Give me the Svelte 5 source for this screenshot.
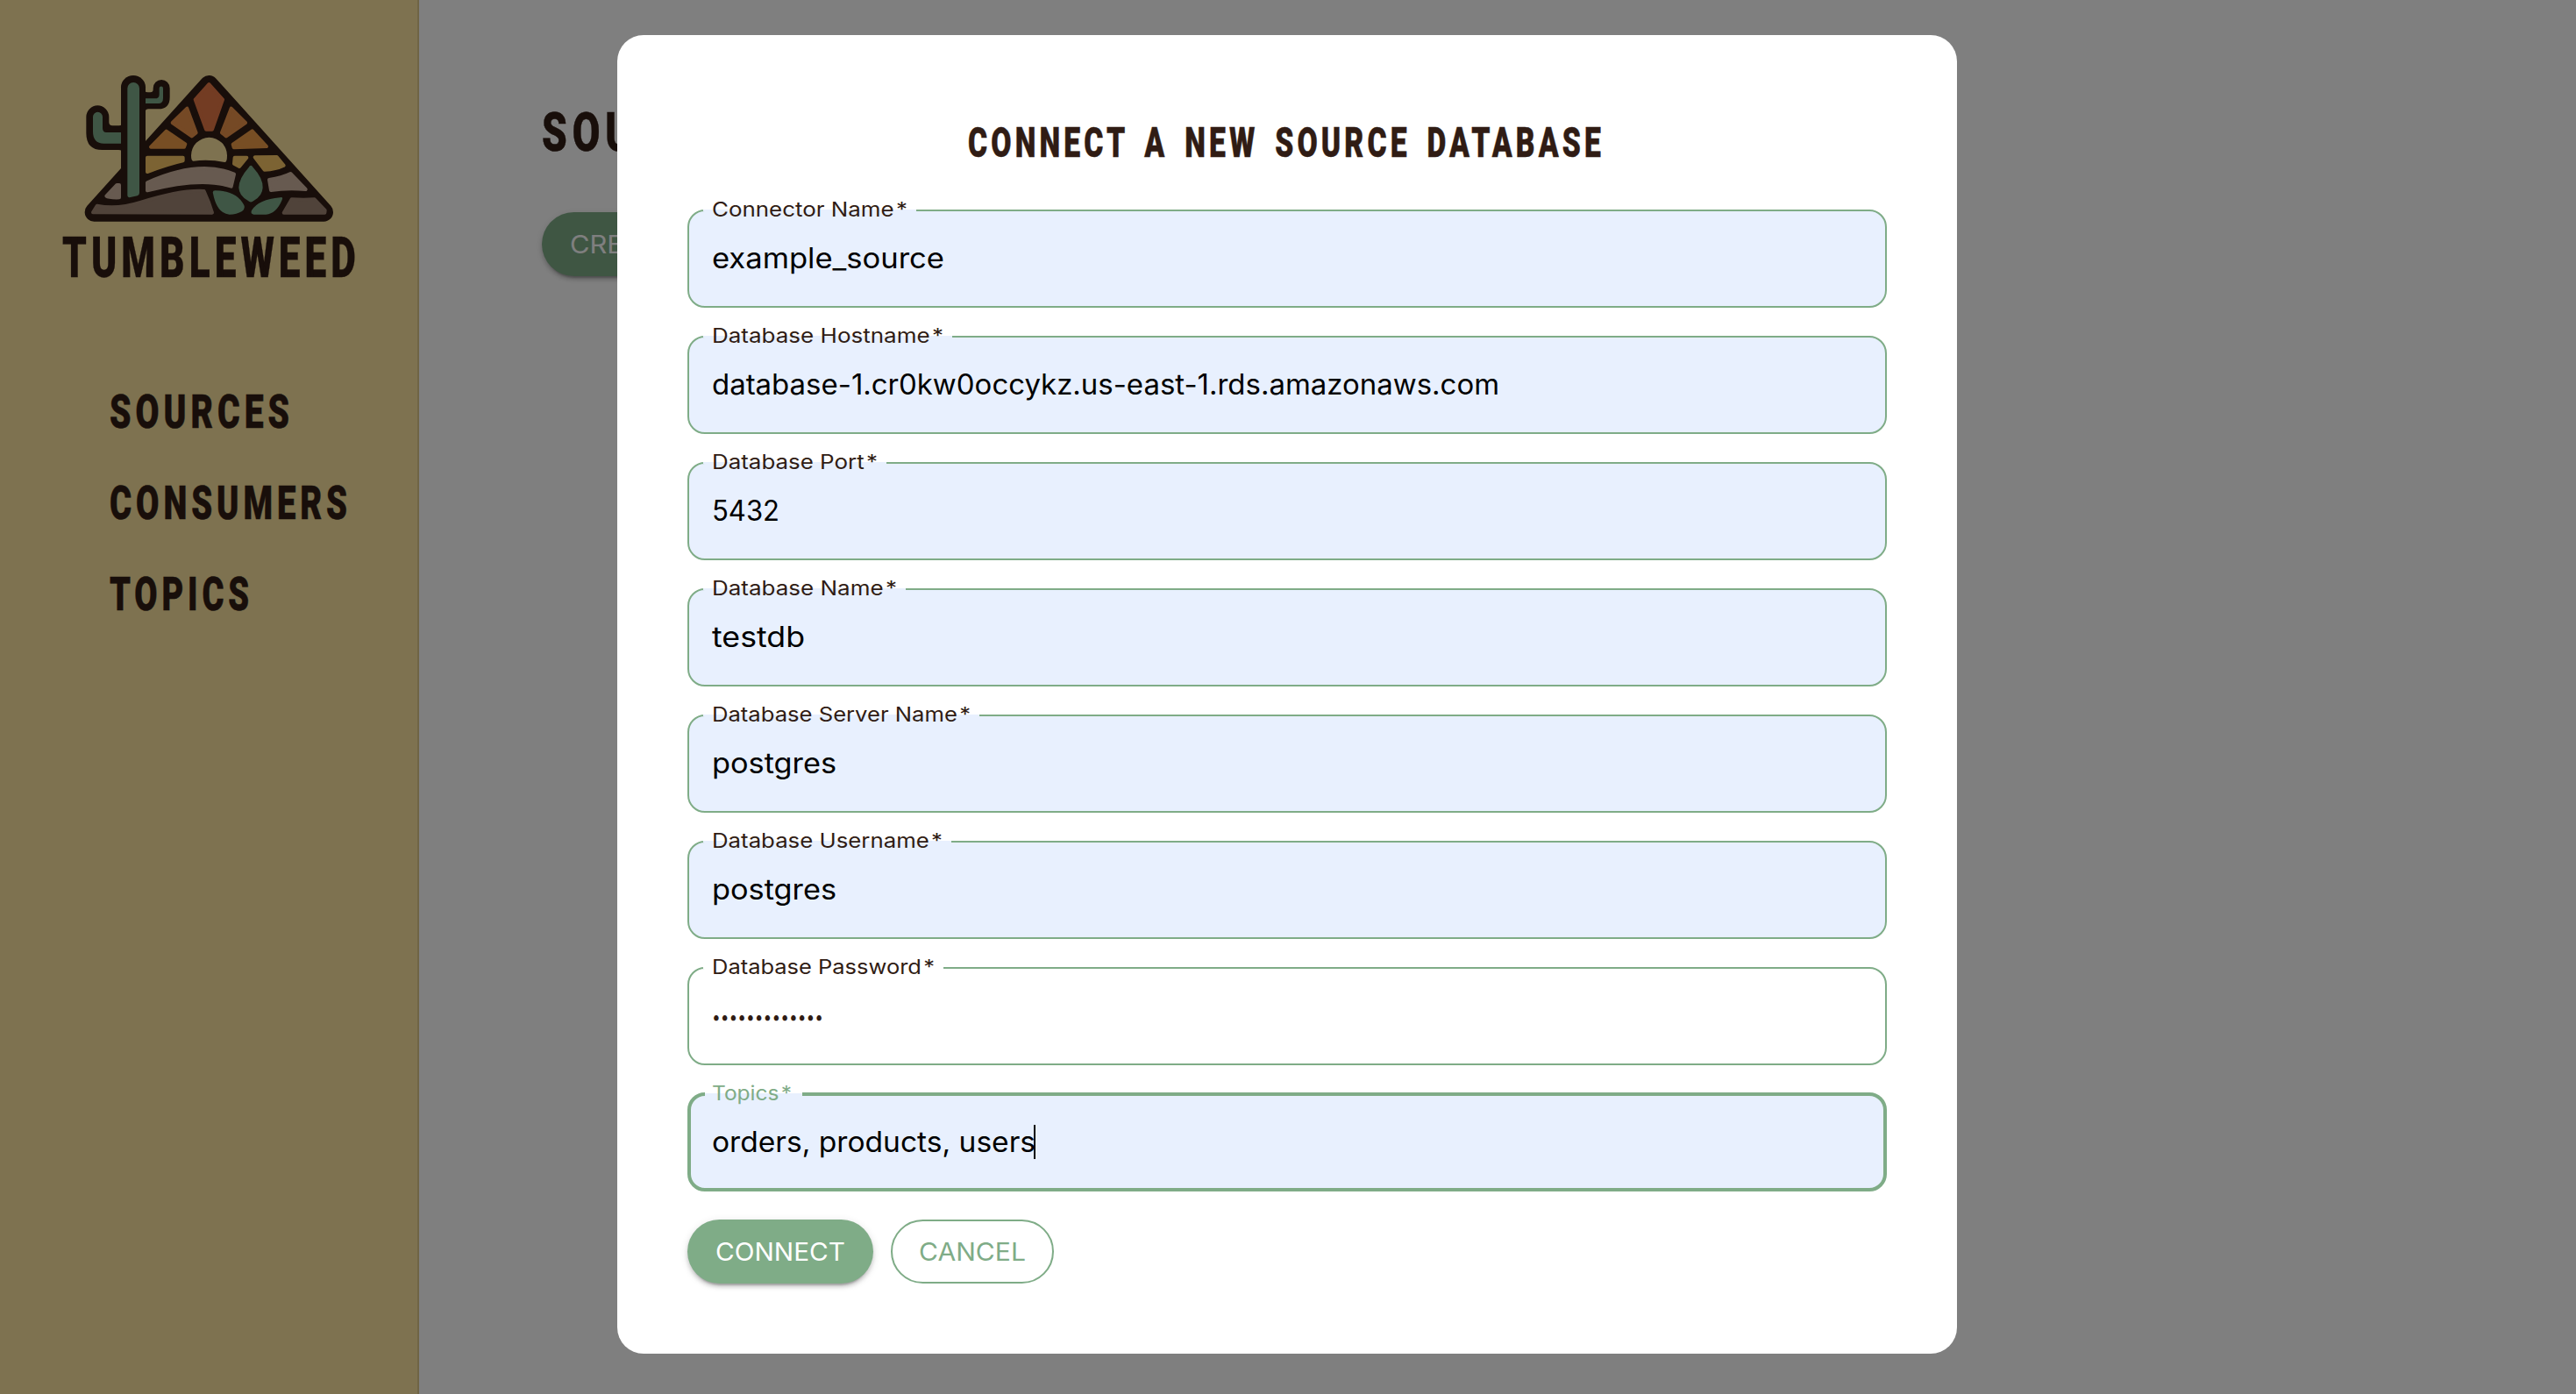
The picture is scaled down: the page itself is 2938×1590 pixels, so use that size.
<script>
  const nav = [
    { text: 'SOURCES', width: 210 },
    { text: 'CONSUMERS', width: 276 },
    { text: 'TOPICS', width: 164 },
  ];

  // label / value widths are the drawn text widths in pixels
  const fields = [
    { label: 'Connector Name', labelWidth: 223, value: 'example_source', valueWidth: 265, filled: true },
    { label: 'Database Hostname', labelWidth: 264, value: 'database-1.cr0kw0occykz.us-east-1.rds.amazonaws.com', valueWidth: 898, filled: true },
    { label: 'Database Port', labelWidth: 189, value: '5432', valueWidth: 77, filled: true },
    { label: 'Database Name', labelWidth: 211, value: 'testdb', valueWidth: 106, filled: true },
    { label: 'Database Server Name', labelWidth: 295, value: 'postgres', valueWidth: 142, filled: true },
    { label: 'Database Username', labelWidth: 263, value: 'postgres', valueWidth: 142, filled: true },
    { label: 'Database Password', labelWidth: 254, value: '•••••••••••••', valueWidth: 127, password: true },
    { label: 'Topics', labelWidth: 91, value: 'orders, products, users', valueWidth: 369, filled: true, focused: true },
  ];
</script>

{#snippet fit(text, width, height, baseline, kind)}
  <svg class="fit {kind}" {width} {height} role="img" aria-label={text}>
    <text x="0" y={baseline} textLength={width} lengthAdjust="spacingAndGlyphs">{text}</text>
  </svg>
{/snippet}

<div class="page">
  <aside>
    <svg class="logo" width="360" height="270" viewBox="0 0 1080 810">
      <g class="ink">
        <path class="frame" d="M535 80 L142 516 H928 Z" />
        <path d="M234 88 a42 40 0 0 1 84 0 V480 H234 Z" />
        <path d="M115 190 a39 39 0 0 1 78 0 V208 Q193 220 205 220 H227 Q234 220 236 215 V307 Q234 303 225 303 H170 Q115 303 115 245 Z" />
        <path d="M316 101 Q318 106 326 106 H334 Q344 106 344 96 V92 a28.500 29 0 0 1 57 0 V122 Q401 163 362 163 H328 Q318 163 317 172 Z" />
      </g>
      <path class="leaf" d="M256 92 a20.500 20 0 0 1 41 0 V450 Q297 458 290 460 L266 465 Q256 467 256 459 Z" />
      <path class="leaf" d="M138 190 a16.500 16.500 0 0 1 33 0 V228 Q171 243 184 243 H234 V281 H175 Q138 281 138 240 Z" />
      <path class="leaf" d="M318 127 H350 Q365 127 365 113 V92 a6.500 6.500 0 0 1 13 0 V126 Q378 144 362 144 H318 Z" />
      <path class="ray red" d="M535 78 L582 131 L546 233 H525 L488 131 Z" />
      <path class="ray amber" d="M460 161 L410 210 L476 256 L491 244 Z" />
      <path class="ray amber" d="M611 161 L660 210 L594 256 L579 244 Z" />
      <path class="ray orange" d="M389 239 L336 293 H450 L454 283 Z" />
      <path class="ray orange" d="M683 238 L732 291 L620 295 L617 284 Z" />
      <path class="ray gold" d="M324 329 H446 V340 Q400 350 324 378 Z" />
      <path class="ray gold" d="M623 329 H664 L639 360 L621 350 Z" />
      <path class="ray gold" d="M692 328 L767 327 L791 356 Q765 369 725 371 Z" />
      <path class="sun" d="M482 341 Q474 342 474 322 A61.500 61.500 0 0 1 597 322 Q597 348 588 345 Q535 334 482 341 Z" />
      <path class="ray mauve" d="M324 415 Q430 366 520 366 Q575 366 621 386 L611 428 Q510 394 324 442 Z" />
      <path class="ray mauve" d="M228 423 H220 L184 461 Q192 467 228 466 Z" />
      <path class="ray mauve" d="M741 405 Q785 398 814 384 L866 438 Q800 433 747 441 Z" />
      <path class="ray brown" d="M138 517 L152 494 Q220 508 300 483 Q440 439 518 444 Q535 480 546 518 Z" />
      <path class="ray brown" d="M818 472 Q860 474 896 472 L932 510 L931 518 H791 Z" />
      <path class="leaf" d="M671 363 Q678 350 686 363 Q720 400 719 432 Q718 460 688 477 Q678 486 668 476 Q638 460 637 432 Q638 400 671 363 Z" />
      <path class="leaf" d="M556 442 Q630 442 655 492 Q660 504 648 513 Q630 524 605 524 Q562 520 549 452 Q546 442 556 442 Z" />
      <path class="leaf" d="M778 466 Q790 463 785 474 Q765 522 730 524 H688 Q676 522 681 510 Q705 472 778 466 Z" />
      <text class="wordmark" x="33" y="739" textLength="1020" lengthAdjust="spacingAndGlyphs">TUMBLEWEED</text>
    </svg>
    <nav>
      {#each nav as item}
        {@render fit(item.text, item.width, 104, 72, 'link')}
      {/each}
    </nav>
  </aside>
  <main>
    {@render fit('SOURCES', 247, 115, 44.5, 'heading')}
    <button class="solid create">{@render fit('CREATE', 118, 30, 24.5, 'action')}</button>
  </main>
</div>

<div class="backdrop">
  <section class="modal">
    <header>{@render fit('CONNECT A NEW SOURCE DATABASE', 726, 119, 58.5, 'title')}</header>
    <form>
      {#each fields as field}
        <div class="field" class:filled={field.filled} class:focused={field.focused}>
          <span class="notch" style="width: {field.labelWidth + 20}px"></span>
          {@render fit(field.label + '\u200a*', field.labelWidth, 10, 5.7, 'label')}
          <div class="entry">
            {@render fit(field.value, field.valueWidth, 80, field.password ? 52 : 55, field.password ? 'value secret' : 'value')}
            {#if field.focused}<i class="caret"></i>{/if}
          </div>
        </div>
      {/each}
      <footer>
        <button class="solid" type="button">{@render fit('CONNECT', 148, 30, 24.5, 'action')}</button>
        <button class="outline" type="button">{@render fit('CANCEL', 122, 30, 24.5, 'action')}</button>
      </footer>
    </form>
  </section>
</div>

<style>
  :global(body) { background: #fff; overflow: hidden; }
  * { box-sizing: border-box; }
  .page { display: flex; height: 1590px; }
  aside {
    width: 478px;
    padding: 70px 0 0 60px;
    background: #fce4a0;
    border-right: 2px solid #dfc88c;
  }
  svg { display: block; overflow: visible; flex: none; }
  nav { padding: 76px 0 0 65px; }
  main { padding: 127px 0 0 140px; }

  .ink { fill: #301c14; }
  .frame { stroke: #301c14; stroke-width: 64; stroke-linejoin: round; }
  .leaf { fill: #7eac8a; }
  .ray { stroke-width: 12; stroke-linejoin: round; }
  .red { fill: #e67846; stroke: #e67846; }
  .amber { fill: #ea924a; stroke: #ea924a; }
  .orange { fill: #ee9c48; stroke: #ee9c48; }
  .gold { fill: #f8c666; stroke: #f8c666; }
  .mauve { fill: #ceb4a0; stroke: #ceb4a0; }
  .brown { fill: #a08674; stroke: #a08674; }
  .sun { fill: #fce4a0; }

  .wordmark, .link, .heading, .title {
    font-family: Roboto, "Liberation Sans", sans-serif;
    font-weight: 900;
    fill: #301c14;
    stroke: #301c14;
    stroke-width: 0.5;
  }
  .wordmark { font-size: 193px; letter-spacing: 22px; stroke-width: 1; }
  .link { font-size: 54.500px; letter-spacing: 7px; }
  .heading { font-size: 62px; letter-spacing: 8px; }
  .title { font-size: 48.500px; letter-spacing: 6px; word-spacing: 9px; }

  .label, .value, .action { font-family: Inter, "Liberation Sans", sans-serif; }
  .label { position: relative; z-index: 1; font-size: 22.500px; fill: #301c14; }
  .value { font-size: 32px; fill: #000; }
  .secret { fill: #301c14; font-size: 20px; }
  .action { font-size: 28px; fill: currentColor; }

  .backdrop {
    position: fixed;
    inset: 0;
    display: flex;
    justify-content: center;
    align-items: flex-start;
    padding: 40px 2px 0 0;
    background: rgba(0, 0, 0, 0.5);
  }
  .modal {
    width: 1528px;
    height: 1504px;
    padding: 80px;
    border-radius: 30px;
    background: #fff;
  }
  header { display: flex; justify-content: center; padding-right: 2px; }
  form { display: flex; flex-direction: column; gap: 32px; }

  .field {
    position: relative;
    height: 112px;
    padding-left: 26px;
    border: 2px solid #7fac87;
    border-radius: 20px;
    background: #fff;
  }
  .filled { background: #e8f0fe; }
  .focused { height: 113px; margin-top: -1px; padding-left: 24px; border-width: 4px; }
  .notch { position: absolute; top: -2px; left: 16px; height: 2px; background: inherit; }
  .focused .notch { top: -4px; height: 4px; border-top: 1px solid #fff; }
  .focused .label { fill: #7fac87; margin-top: -1px; }
  .entry { display: flex; }
  .caret { width: 2px; height: 39px; margin: 24px 0 0 -2px; background: #000; }

  footer { display: flex; gap: 20px; }
  button {
    display: flex;
    align-items: center;
    height: 73px;
    padding: 0 32px;
    border: 0;
    border-radius: 37px;
  }
  .solid {
    color: #fff;
    background: #7fac87;
    box-shadow: 0 6px 2px -4px rgba(0, 0, 0, 0.2), 0 4px 4px rgba(0, 0, 0, 0.14), 0 2px 10px rgba(0, 0, 0, 0.12);
  }
  .outline { color: #7fac87; background: #fff; border: 2px solid #7fac87; padding: 0 30px; }
</style>
